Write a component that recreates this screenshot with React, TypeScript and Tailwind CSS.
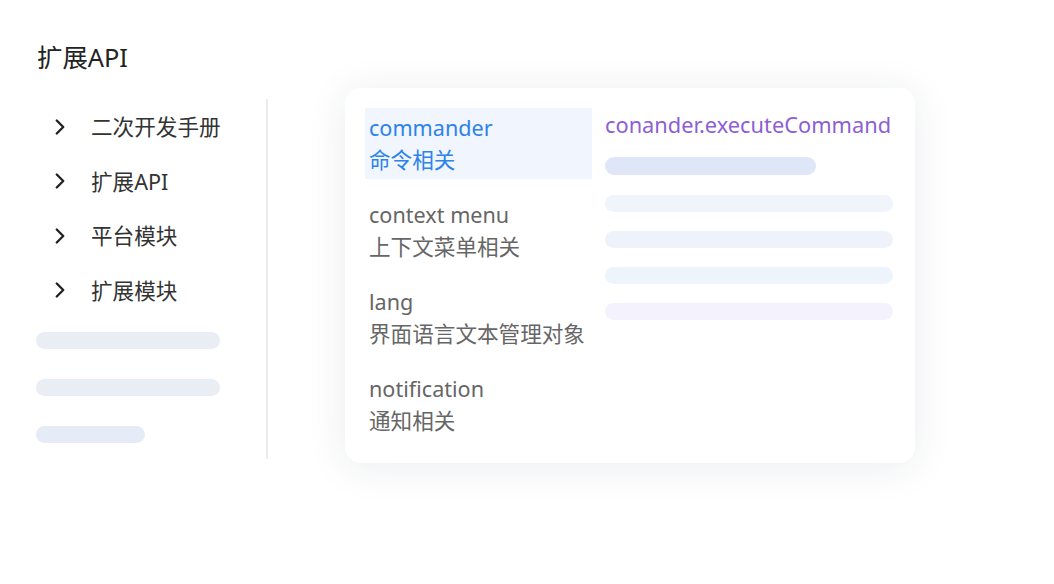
import { ChevronRight } from 'lucide-react'

const font = { fontFamily: '"Noto Sans", "Noto Sans CJK SC", sans-serif' }

const navItems = ['二次开发手册', '扩展API', '平台模块', '扩展模块']

const apis = [
  { name: 'commander', desc: '命令相关', active: true },
  { name: 'context menu', desc: '上下文菜单相关' },
  { name: 'lang', desc: '界面语言文本管理对象' },
  { name: 'notification', desc: '通知相关' },
]

const App = () => {
  return (
    <div className="w-[1054px] h-[584px] bg-white overflow-hidden" style={font}>
      <div className="pt-[40px] pl-[37px] text-[25.4px] leading-[34px] text-[#222222]">扩展API</div>
      <div className="flex mt-[26px]">
        <div className="w-[266px] pl-[36px]">
          <div className="flex flex-col pl-[11px]">
            {navItems.map((item) => (
              <div key={item} className="h-[54.5px] flex items-center text-[21.6px] text-[#333333]">
                <ChevronRight size={26} strokeWidth={2.2} className="text-[#222222] mr-[18px] -mt-[1px]" />
                {item}
              </div>
            ))}
          </div>
          <div className="mt-[14px] flex flex-col gap-[30px]">
            <div className="h-[17px] w-[184px] rounded-full bg-[#e9edf4]" />
            <div className="h-[17px] w-[184px] rounded-full bg-[#e9edf4]" />
            <div className="h-[17px] w-[109px] rounded-full bg-[#e6ecf7]" />
          </div>
        </div>
        <div className="w-[2px] h-[360px] bg-[#ececec] -mt-[1px]" />
        <div className="ml-[77px] -mt-[12px] w-[570px] h-[375px] bg-white rounded-[16px] shadow-[0_4px_40px_rgba(30,40,80,0.09)] flex pt-[20px] pl-[20px]">
          <div className="w-[227px] flex flex-col gap-[16px]">
            {apis.map((a) => (
              <div
                key={a.name}
                className={`h-[71px] pl-[4px] flex flex-col justify-center text-[21.6px] leading-[32px] ${
                  a.active ? 'bg-[#f1f5fd] text-[#2d83ea]' : 'text-[#666666]'
                }`}
              >
                <div>{a.name}</div>
                <div>{a.desc}</div>
              </div>
            ))}
          </div>
          <div className="ml-[13px] flex flex-col">
            <div className="text-[21.8px] leading-[32px] text-[#8d5fd3] mt-[1px]">conander.executeCommand</div>
            <div className="mt-[16px] h-[18px] w-[211px] rounded-full bg-[#dee6f8]" />
            <div className="mt-[20px] h-[17px] w-[288px] rounded-full bg-[#f0f5fc]" />
            <div className="mt-[19px] h-[17px] w-[288px] rounded-full bg-[#eef3fb]" />
            <div className="mt-[19px] h-[17px] w-[288px] rounded-full bg-[#eef4fb]" />
            <div className="mt-[19px] h-[17px] w-[288px] rounded-full bg-[#f3f2fd]" />
          </div>
        </div>
      </div>
    </div>
  )
}

export default App
